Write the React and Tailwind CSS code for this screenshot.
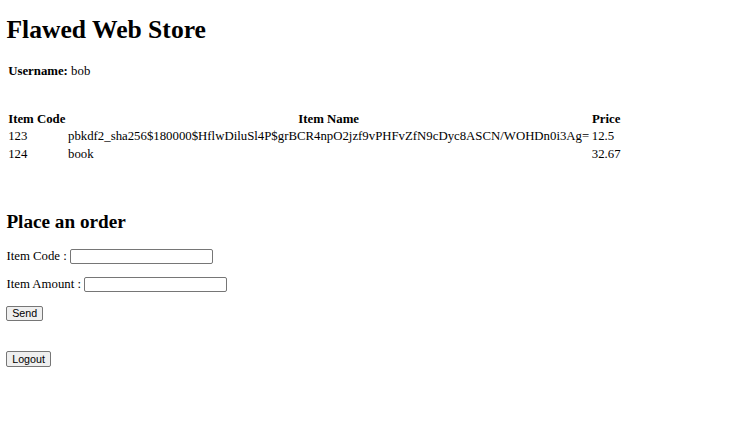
import React from 'react';

const items = [
  { code: '123', name: 'pbkdf2_sha256$180000$HflwDiluSl4P$grBCR4npO2jzf9vPHFvZfN9cDyc8ASCN/WOHDn0i3Ag=', price: '12.5' },
  { code: '124', name: 'book', price: '32.67' },
];

export default function App() {
  return (
    <div className="min-h-[431px] bg-white px-[6.4px] pb-[20px] pt-px font-['Liberation_Serif',serif] text-[12.8px] leading-[normal] text-black">
      <h1 className="mt-[14px] mb-[17.5px] text-[25.6px] font-bold leading-[normal]">Flawed Web Store</h1>

      <table className="border-separate border-spacing-[1.6px]">
        <tbody>
          <tr>
            <td className="p-[0.8px]">
              <b>Username:</b> bob
            </td>
          </tr>
        </tbody>
      </table>

      <table className="mt-[29px] border-separate border-spacing-[1.6px]">
        <thead>
          <tr>
            <th className="p-[0.8px] text-center font-bold">Item Code</th>
            <th className="p-[0.8px] text-center font-bold">Item Name</th>
            <th className="p-[0.8px] text-center font-bold">Price</th>
          </tr>
        </thead>
        <tbody>
          {items.map(it => (
            <tr key={it.code}>
              <td className="p-[0.8px]">{it.code}</td>
              <td className="p-[0.8px]">{it.name}</td>
              <td className="p-[0.8px]">{it.price}</td>
            </tr>
          ))}
        </tbody>
      </table>

      <h2 className="mt-[47.5px] mb-[15.8px] text-[19.2px] font-bold leading-[normal]">Place an order</h2>

      <form onSubmit={e => e.preventDefault()}>
        <div className="flex h-[15px] items-center">
          <span>Item Code :</span>
          <input type="text" className="ml-[3.2px] h-[15px] w-[143px] rounded-[2px] border border-[#767676] bg-white px-[2px] text-[10.7px]" />
        </div>
        <div className="mt-[13.2px] flex h-[15px] items-center">
          <span>Item Amount :</span>
          <input type="text" className="ml-[3.2px] h-[15px] w-[143px] rounded-[2px] border border-[#767676] bg-white px-[2px] text-[10.7px]" />
        </div>
        <button type="submit" className="mt-[13.5px] flex h-[15px] items-center rounded-[2px] border border-[#767676] bg-[#efefef] px-[4.8px] font-['Liberation_Sans',Arial,sans-serif] text-[10.7px] leading-none text-black">
          Send
        </button>
      </form>

      <button type="button" className="mt-[30.3px] flex h-[15.7px] items-center rounded-[2px] border border-[#767676] bg-[#efefef] px-[4.8px] font-['Liberation_Sans',Arial,sans-serif] text-[10.7px] leading-none text-black">
        Logout
      </button>
    </div>
  );
}
